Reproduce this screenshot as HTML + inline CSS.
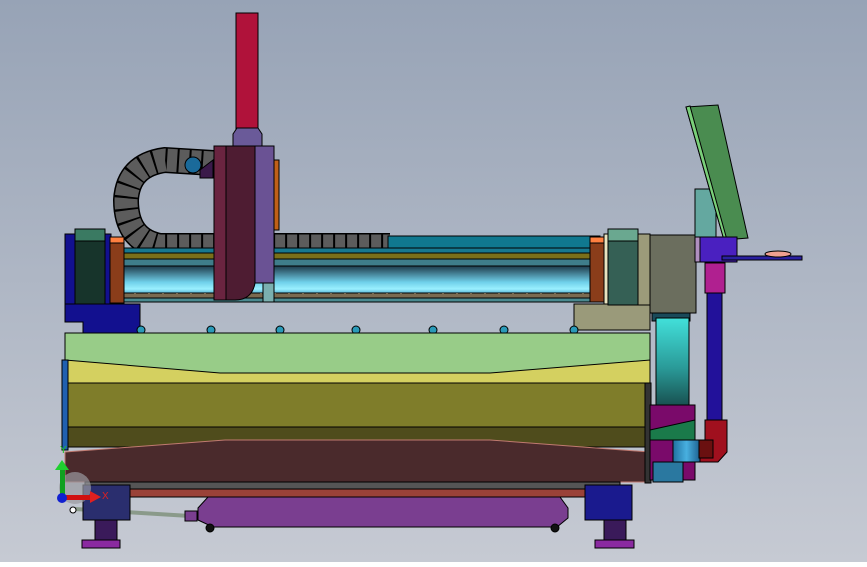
<!DOCTYPE html>
<html><head><style>html,body{margin:0;padding:0}body{width:867px;height:562px;overflow:hidden}</style></head><body>
<svg width="867" height="562" viewBox="0 0 867 562" xmlns="http://www.w3.org/2000/svg" stroke="#000" stroke-width="1">
<defs>
<linearGradient id="bg" x1="0" y1="0" x2="0" y2="1"><stop offset="0" stop-color="#97a3b6"/><stop offset="1" stop-color="#c6cad3"/></linearGradient>
<linearGradient id="tube" x1="0" y1="0" x2="0" y2="1"><stop offset="0" stop-color="#1e3a4a"/><stop offset="0.6" stop-color="#6fd0ea"/><stop offset="0.85" stop-color="#9af0ff"/><stop offset="1" stop-color="#5ab8d8"/></linearGradient>
<linearGradient id="chain" x1="0" y1="0" x2="0" y2="1"><stop offset="0" stop-color="#42e0da"/><stop offset="0.5" stop-color="#2a9a98"/><stop offset="1" stop-color="#123838"/></linearGradient>
<linearGradient id="cyl" x1="0" y1="0" x2="1" y2="0"><stop offset="0" stop-color="#2070a0"/><stop offset="0.5" stop-color="#48b0e0"/><stop offset="1" stop-color="#1d6090"/></linearGradient>
</defs>
<rect width="867" height="562" fill="url(#bg)" stroke="none"/>
<!-- cable chain arc -->
<path d="M213,163 L165,160 Q128,165 126,200 Q126,240 160,246 L390,246" fill="none" stroke="#000" stroke-width="26"/>
<path d="M213,163 L165,160 Q128,165 126,200 Q126,240 160,246 L390,246" fill="none" stroke="#5c5c5c" stroke-width="23" stroke-dasharray="10 2"/>
<circle cx="193" cy="165" r="8" fill="#1a6a9a"/>
<!-- right rail top -->
<rect x="388" y="236" width="212" height="14" fill="#10788f"/>
<!-- beam -->
<rect x="122" y="248" width="478" height="5" fill="#17788f"/>
<rect x="122" y="253" width="478" height="6" fill="#7a6f1a"/>
<rect x="122" y="259" width="478" height="7" fill="#3f7d8a"/>
<rect x="122" y="266" width="478" height="27" fill="url(#tube)"/>
<rect x="122" y="293" width="478" height="5" fill="#7a6a50" stroke-dasharray="12 2"/>
<rect x="122" y="298" width="478" height="4" fill="#4a8a90"/>
<!-- left end -->
<rect x="65" y="234" width="46" height="71" fill="#12108f"/>
<rect x="75" y="229" width="30" height="76" fill="#17342b"/>
<rect x="75" y="229" width="30" height="12" fill="#3a7a62"/>
<rect x="110" y="237" width="14" height="66" fill="#8a3d1a"/>
<rect x="110" y="237" width="14" height="6" fill="#ff8040"/>
<path d="M65,304 H140 V333 H83 V322 H65 Z" fill="#12108f"/>
<!-- right end -->
<rect x="574" y="304" width="76" height="26" fill="#9a9a7a"/>
<rect x="590" y="237" width="14" height="65" fill="#8a3d1a"/>
<rect x="590" y="237" width="14" height="6" fill="#ff8040"/>
<rect x="604" y="234" width="5" height="70" fill="#e8e4c0"/>
<rect x="608" y="229" width="30" height="76" fill="#356055"/>
<rect x="608" y="229" width="30" height="12" fill="#6aa890"/>
<rect x="638" y="234" width="12" height="71" fill="#9c9b7a"/>
<rect x="650" y="235" width="46" height="78" fill="#6b6e5e"/>
<!-- Z column -->
<rect x="236" y="13" width="22" height="121" fill="#b0123a"/>
<path d="M233,134 L237,128 H258 L262,134 V148 H233 Z" fill="#6a5a99"/>
<rect x="255" y="146" width="19" height="137" fill="#6a5294"/>
<rect x="274" y="160" width="5" height="70" fill="#c06018"/>
<rect x="263" y="283" width="11" height="19" fill="#7ab0b0"/>
<path d="M214,146 H255 V283 Q252,300 235,300 H214 Z" fill="#4e1c32"/>
<rect x="214" y="146" width="12" height="154" fill="#6a2440"/>
<path d="M213,160 L200,170 V178 H213 Z" fill="#3a1a4a"/>
<!-- bolts -->
<g fill="#2a9ab8"><circle cx="141" cy="330" r="4"/><circle cx="211" cy="330" r="4"/><circle cx="280" cy="330" r="4"/><circle cx="356" cy="330" r="4"/><circle cx="433" cy="330" r="4"/><circle cx="504" cy="330" r="4"/><circle cx="574" cy="330" r="4"/></g>
<!-- table -->
<rect x="65" y="333" width="585" height="45" fill="#98cc88"/>
<path d="M65,360 L220,373 H490 L650,360 V385 H65 Z" fill="#d4d060"/>
<rect x="65" y="383" width="585" height="45" fill="#7f7d2a"/>
<rect x="65" y="427" width="585" height="20" fill="#4f4c1c"/>
<path d="M65,452 L225,440 H490 L650,452 V482 H65 Z" fill="#4a2a2c" stroke="#c07a70"/>
<rect x="62" y="360" width="6" height="90" fill="#2060b0"/>
<rect x="645" y="383" width="6" height="100" fill="#333"/>
<!-- under -->
<rect x="85" y="482" width="535" height="7" fill="#555"/>
<rect x="130" y="489" width="455" height="8" fill="#9a4238"/>
<path d="M208,497 H560 L568,508 V518 L557,527 H213 L198,520 V508 Z" fill="#7a3e90"/>
<circle cx="210" cy="528" r="4" fill="#111"/><circle cx="555" cy="528" r="4" fill="#111"/>
<line x1="75" y1="509" x2="190" y2="516" stroke="#8a9a8a" stroke-width="4"/>
<rect x="185" y="511" width="12" height="10" fill="#7a3e90"/>
<rect x="83" y="485" width="47" height="35" fill="#2a2e6e"/>
<rect x="585" y="485" width="47" height="35" fill="#1a1a8e"/>
<rect x="95" y="520" width="22" height="20" fill="#3a1a5a"/><rect x="82" y="540" width="38" height="8" fill="#8a2aa0"/>
<rect x="604" y="520" width="22" height="20" fill="#3a1a5a"/><rect x="595" y="540" width="39" height="8" fill="#8a2aa0"/>
<!-- right side chain & magenta -->
<rect x="652" y="313" width="38" height="8" fill="#1a4a5a"/>
<rect x="656" y="318" width="33" height="100" fill="url(#chain)"/>
<path d="M650,405 H695 V480 H650 Z" fill="#7a0a6a"/>
<path d="M650,430 L695,420 V440 H650 Z" fill="#1a7a4a"/>
<rect x="653" y="462" width="30" height="20" fill="#2a78a0"/>
<rect x="673" y="440" width="27" height="22" fill="url(#cyl)"/>
<!-- pole -->
<rect x="707" y="290" width="15" height="130" fill="#22119a"/>
<rect x="705" y="263" width="20" height="30" fill="#b02090"/>
<path d="M705,420 H727 V452 L718,462 H700 V440 H705 Z" fill="#a0101e"/>
<rect x="699" y="440" width="14" height="18" fill="#6a1010"/>
<!-- monitor -->
<rect x="695" y="189" width="21" height="48" fill="#64a8a0"/>
<path d="M686,107 L718,105 L748,238 L724,240 Z" fill="#4a8c50" stroke="#000"/>
<path d="M686,107 L690,106 L727,240 L724,240 Z" fill="#7ad07a"/>
<rect x="695" y="237" width="42" height="25" fill="#4a20c0"/>
<rect x="695" y="237" width="5" height="25" fill="#b090c0"/>
<rect x="722" y="256" width="80" height="4" fill="#2a20a0"/>
<ellipse cx="778" cy="254" rx="13" ry="3" fill="#f0a090"/>
<!-- axis triad -->
<g stroke="none">
<circle cx="75" cy="488" r="16" fill="#9a9aa0" opacity="0.7"/>
<rect x="60" y="468" width="5" height="30" fill="#10a020"/><path d="M55,470 L62,460 L69,470 Z" fill="#20d030"/>
<rect x="62" y="495" width="30" height="5" fill="#d01010"/><path d="M90,491 L101,497 L90,503 Z" fill="#e02020"/>
<circle cx="62" cy="498" r="5" fill="#1020d0"/>
<text x="60" y="453" font-family="Liberation Sans, sans-serif" font-size="10" fill="#20c020">Y</text>
<text x="102" y="499" font-family="Liberation Sans, sans-serif" font-size="10" fill="#e02020">X</text>
</g>
<circle cx="73" cy="510" r="3" fill="#fff"/>
</svg>
</body></html>
